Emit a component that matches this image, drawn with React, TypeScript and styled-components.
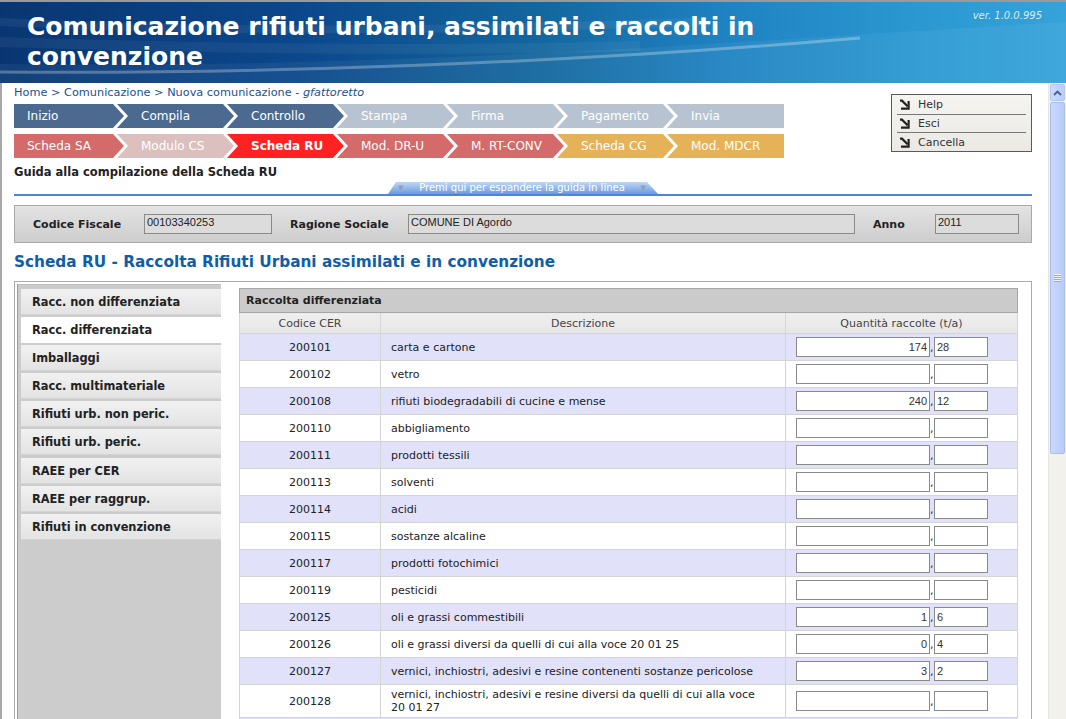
import React, { FC } from "react";
import styled, { createGlobalStyle } from "styled-components";

type Row = { code: string; desc: string; whole?: string; dec?: string; tall?: boolean };

const steps = ["Inizio", "Compila", "Controllo", "Stampa", "Firma", "Pagamento", "Invia"];
const stepColors = ["#4c6a90", "#4c6a90", "#4c6a90", "#b8c3d1", "#b8c3d1", "#b8c3d1", "#b8c3d1"];

const forms = [
  { label: "Scheda SA", color: "#d46a6a" },
  { label: "Modulo CS", color: "#dcbfbf" },
  { label: "Scheda RU", color: "#ff2222", active: true },
  { label: "Mod. DR-U", color: "#d46a6a" },
  { label: "M. RT-CONV", color: "#d46a6a" },
  { label: "Scheda CG", color: "#e6b258" },
  { label: "Mod. MDCR", color: "#e6b258" },
];

const menu = [
  "Racc. non differenziata",
  "Racc. differenziata",
  "Imballaggi",
  "Racc. multimateriale",
  "Rifiuti urb. non peric.",
  "Rifiuti urb. peric.",
  "RAEE per CER",
  "RAEE per raggrup.",
  "Rifiuti in convenzione",
];

const rows: Row[] = [
  { code: "200101", desc: "carta e cartone", whole: "174", dec: "28" },
  { code: "200102", desc: "vetro" },
  { code: "200108", desc: "rifiuti biodegradabili di cucine e mense", whole: "240", dec: "12" },
  { code: "200110", desc: "abbigliamento" },
  { code: "200111", desc: "prodotti tessili" },
  { code: "200113", desc: "solventi" },
  { code: "200114", desc: "acidi" },
  { code: "200115", desc: "sostanze alcaline" },
  { code: "200117", desc: "prodotti fotochimici" },
  { code: "200119", desc: "pesticidi" },
  { code: "200125", desc: "oli e grassi commestibili", whole: "1", dec: "6" },
  { code: "200126", desc: "oli e grassi diversi da quelli di cui alla voce 20 01 25", whole: "0", dec: "4" },
  { code: "200127", desc: "vernici, inchiostri, adesivi e resine contenenti sostanze pericolose", whole: "3", dec: "2" },
  { code: "200128", desc: "vernici, inchiostri, adesivi e resine diversi da quelli di cui alla voce 20 01 27", tall: true },
];

const LinkArrow: FC = () => (
  <svg width="11" height="11" viewBox="0 0 11 11">
    <path d="M1 1.6 H3 L8.6 7.2" stroke="#222" strokeWidth="2.2" fill="none" />
    <path d="M9.6 2 V9.6 H2" stroke="#222" strokeWidth="2.2" fill="none" />
  </svg>
);

const Swoosh: FC = () => (
  <HeaderArt viewBox="0 0 1066 81" preserveAspectRatio="none">
    <path d="M0 70 C 250 72, 560 62, 860 36" stroke="#ffffff" strokeOpacity="0.28" strokeWidth="3" fill="none" />
    <path d="M0 62 C 300 66, 600 50, 900 30 L 1066 20 L1066 81 L0 81 Z" fill="#ffffff" fillOpacity="0.05" />
    <path d="M0 20 C 200 30, 400 30, 700 20" stroke="#ffffff" strokeOpacity="0.06" strokeWidth="8" fill="none" />
    <path d="M0 40 C 200 46, 400 50, 640 44" stroke="#ffffff" strokeOpacity="0.05" strokeWidth="10" fill="none" />
  </HeaderArt>
);

const App: FC = () => (
  <Page>
    <GlobalStyle />
    <Header>
      <Swoosh />
      <HeaderTitle>
        Comunicazione rifiuti urbani, assimilati e raccolti in
        <br />
        convenzione
      </HeaderTitle>
      <Version>ver. 1.0.0.995</Version>
    </Header>
    <Body>
      <Frame>
        <TopSection>
          <TopLeft>
            <Breadcrumb>
              Home &gt; Comunicazione &gt; Nuova comunicazione - <em>gfattoretto</em>
            </Breadcrumb>
            <StepRow>
              {steps.map((s, i) => (
                <Step key={s} $color={stepColors[i]} $first={i === 0} $last={i === steps.length - 1}>
                  {s}
                </Step>
              ))}
            </StepRow>
            <StepRow>
              {forms.map((f, i) => (
                <Step
                  key={f.label}
                  $color={f.color}
                  $first={i === 0}
                  $last={i === forms.length - 1}
                  $bold={f.active}
                >
                  {f.label}
                </Step>
              ))}
            </StepRow>
            <GuideTitle>Guida alla compilazione della Scheda RU</GuideTitle>
          </TopLeft>
          <HelpBox>
            <HelpItem>
              <LinkArrow />
              Help
            </HelpItem>
            <HelpItem>
              <LinkArrow />
              Esci
            </HelpItem>
            <HelpItem>
              <LinkArrow />
              Cancella
            </HelpItem>
          </HelpBox>
        </TopSection>
        <GuideBar>
          <GuideTab>
            <Tri>▼</Tri>
            Premi qui per espandere la guida in linea
            <Tri>▼</Tri>
          </GuideTab>
        </GuideBar>
        <InfoBar>
          <InfoLabel $w={129}>Codice Fiscale</InfoLabel>
          <InfoField $w={128}>00103340253</InfoField>
          <InfoLabel $w={136}>Ragione Sociale</InfoLabel>
          <InfoField $w={447}>COMUNE DI Agordo</InfoField>
          <InfoLabel $w={80}>Anno</InfoLabel>
          <InfoField $w={84}>2011</InfoField>
        </InfoBar>
        <PageTitle>Scheda RU - Raccolta Rifiuti Urbani assimilati e in convenzione</PageTitle>
        <MainBox>
          <SideMenu>
            {menu.map((m, i) => (
              <MenuItem key={m} $active={i === 1}>
                {m}
              </MenuItem>
            ))}
          </SideMenu>
          <TableArea>
            <DataTable>
              <colgroup>
                <col style={{ width: 141 }} />
                <col style={{ width: 405 }} />
                <col style={{ width: 232 }} />
              </colgroup>
              <thead>
                <tr>
                  <CaptionCell colSpan={3}>Raccolta differenziata</CaptionCell>
                </tr>
                <tr>
                  <HeadCell>Codice CER</HeadCell>
                  <HeadCell>Descrizione</HeadCell>
                  <HeadCell>Quantità raccolte (t/a)</HeadCell>
                </tr>
              </thead>
              <tbody>
                {rows.map((r, i) => (
                  <BodyRow key={r.code} $alt={i % 2 === 0} $tall={r.tall}>
                    <CodeCell>{r.code}</CodeCell>
                    <DescCell>{r.desc}</DescCell>
                    <QtyCell>
                      <WholeInput readOnly value={r.whole ?? ""} />
                      <Comma>,</Comma>
                      <DecInput readOnly value={r.dec ?? ""} />
                    </QtyCell>
                  </BodyRow>
                ))}
              </tbody>
            </DataTable>
            <NextRow />
          </TableArea>
        </MainBox>
      </Frame>
      <Scrollbar>
        <ScrollButton>
          <svg width="9" height="6" viewBox="0 0 9 6">
            <path d="M1 5 L4.5 1.5 L8 5" stroke="#4d5f86" strokeWidth="1.8" fill="none" />
          </svg>
        </ScrollButton>
        <ScrollThumb>
          <Grip />
        </ScrollThumb>
      </Scrollbar>
    </Body>
  </Page>
);

export default App;

const GlobalStyle = createGlobalStyle`
  html, body {
    margin: 0;
    padding: 0;
    background: #fff;
    overflow: hidden;
  }
  body {
    font-family: "DejaVu Sans", Verdana, sans-serif;
  }
`;

const Page = styled.div`
  width: 1066px;
  height: 719px;
  display: flex;
  flex-direction: column;
  overflow: hidden;
`;

const Header = styled.div`
  position: relative;
  height: 81px;
  flex-shrink: 0;
  border-top: 2px solid #9a9a9a;
  background: linear-gradient(90deg, #093672 0%, #0b478b 28%, #13669d 50%, #1f82c2 68%, #2a97d0 85%, #35a3da 100%);
  overflow: hidden;
`;

const HeaderArt = styled.svg`
  position: absolute;
  inset: 0;
  width: 100%;
  height: 100%;
`;

const HeaderTitle = styled.h1`
  position: relative;
  margin: 0;
  padding: 10px 0 0 27px;
  color: #fff;
  font-family: "DejaVu Sans", Verdana, sans-serif;
  font-size: 25px;
  line-height: 30px;
  font-weight: bold;
`;

const Version = styled.div`
  position: absolute;
  top: 8px;
  right: 24px;
  color: #dde8f2;
  font-size: 10px;
  font-style: italic;
`;

const Body = styled.div`
  flex: 1;
  display: flex;
  min-height: 0;
`;

const Frame = styled.div`
  flex: 1;
  border-left: 2px solid #a8a8a8;
  padding: 2px 16px 0 12px;
  overflow: hidden;
`;

const TopSection = styled.div`
  display: flex;
  justify-content: space-between;
`;

const TopLeft = styled.div`
  display: flex;
  flex-direction: column;
`;

const Breadcrumb = styled.div`
  font-size: 11.3px;
  line-height: 15px;
  color: #1b5291;
  margin-bottom: 4px;

  em {
    font-style: italic;
  }
`;

const StepRow = styled.div`
  display: flex;
  margin-bottom: 6px;
`;

const Step = styled.div<{ $color: string; $first?: boolean; $last?: boolean; $bold?: boolean }>`
  height: 24px;
  width: ${(p) => (p.$first ? 110 : 117)}px;
  margin-left: ${(p) => (p.$first ? 0 : -7)}px;
  padding-left: ${(p) => (p.$first ? 13 : 24)}px;
  box-sizing: border-box;
  background: ${(p) => p.$color};
  color: #fff;
  font-size: 12px;
  font-weight: ${(p) => (p.$bold ? "bold" : "normal")};
  line-height: 24px;
  white-space: nowrap;
  clip-path: ${(p) =>
    p.$first
      ? "polygon(0 0, 99px 0, 110px 50%, 99px 100%, 0 100%)"
      : p.$last
      ? "polygon(0 0, 100% 0, 100% 100%, 0 100%, 11px 50%)"
      : "polygon(0 0, 106px 0, 117px 50%, 106px 100%, 0 100%, 11px 50%)"};
`;

const GuideTitle = styled.div`
  font-size: 11.5px;
  font-weight: bold;
  color: #222;
  line-height: 14px;
  margin-top: 1px;
`;

const HelpBox = styled.div`
  margin-top: 9px;
  width: 141px;
  height: 58px;
  box-sizing: border-box;
  border: 1px solid #5a5a5a;
  background: linear-gradient(#f5f4f0, #ebe9e4);
  padding: 1px 5px 0 5px;
  display: flex;
  flex-direction: column;
`;

const HelpItem = styled.div`
  display: flex;
  align-items: center;
  gap: 8px;
  height: 18px;
  padding-left: 2px;
  font-size: 11px;
  color: #333;

  &:not(:last-child) {
    border-bottom: 1px solid #777;
  }
`;

const GuideBar = styled.div`
  height: 13px;
  border-bottom: 2px solid #4a87d6;
  position: relative;
  margin-top: 2px;
`;

const GuideTab = styled.div`
  position: absolute;
  left: 374px;
  bottom: 0;
  width: 270px;
  height: 12px;
  box-sizing: border-box;
  padding: 0 12px 0 10px;
  display: flex;
  align-items: center;
  justify-content: space-between;
  background: linear-gradient(#c2d7f3, #6a9ae0);
  color: #fff;
  font-size: 10px;
  line-height: 12px;
  clip-path: polygon(8px 0, 259px 0, 100% 100%, 0 100%);
`;

const Tri = styled.span`
  font-size: 7px;
  color: #8da1bb;
`;

const InfoBar = styled.div`
  margin-top: 9px;
  height: 38px;
  box-sizing: border-box;
  border: 1px solid #a9a9a9;
  background: linear-gradient(#e3e3e3, #cdcdcd);
  display: flex;
  align-items: center;
`;

const InfoLabel = styled.div<{ $w: number }>`
  width: ${(p) => p.$w}px;
  box-sizing: border-box;
  padding-left: 18px;
  font-size: 11px;
  font-weight: bold;
  color: #222;
  flex-shrink: 0;
`;

const InfoField = styled.div<{ $w: number }>`
  width: ${(p) => p.$w}px;
  height: 20px;
  box-sizing: border-box;
  border: 1px solid #8a8a8a;
  background: #dcdcdc;
  font-family: "Liberation Sans", Arial, sans-serif;
  font-size: 11px;
  line-height: 15px;
  padding-left: 2px;
  color: #222;
  flex-shrink: 0;
`;

const PageTitle = styled.h2`
  margin: 9px 0 0 0;
  font-size: 15.3px;
  line-height: 20px;
  font-weight: bold;
  color: #0f5ea9;
`;

const MainBox = styled.div`
  margin-top: 9px;
  border: 1px solid #ababab;
  border-bottom: none;
  display: flex;
  align-items: flex-start;
  padding: 2px 13px 0 2px;
  height: 460px;
`;

const SideMenu = styled.div`
  width: 204px;
  align-self: stretch;
  box-sizing: border-box;
  border-left: 1px solid #9c9c9c;
  border-top: 1px solid #bdbdbd;
  background: #cccccc;
  padding: 4px 0 0 3px;
  flex-shrink: 0;
`;

const MenuItem = styled.div<{ $active?: boolean }>`
  height: 26px;
  margin-bottom: 2.1px;
  box-sizing: border-box;
  padding-left: 11px;
  margin-right: ${(p) => (p.$active ? -1 : 0)}px;
  background: ${(p) => (p.$active ? "#ffffff" : "linear-gradient(#f1f1f1, #e3e3e3)")};
  border-bottom: 1px solid ${(p) => (p.$active ? "#ffffff" : "#d4d4d4")};
  font-size: 11.4px;
  font-weight: bold;
  color: #222;
  line-height: 27px;
  white-space: nowrap;
`;

const TableArea = styled.div`
  margin: 4px 0 0 18px;
  width: 778px;
`;

const DataTable = styled.table`
  width: 778px;
  border-collapse: collapse;
  table-layout: fixed;
  font-size: 11px;
  color: #222;
`;

const CaptionCell = styled.th`
  height: 23px;
  padding: 0 0 0 6px;
  text-align: left;
  background: #cbcbcb;
  border: 1px solid #a6a6a6;
  font-weight: bold;
  font-size: 11px;
`;

const HeadCell = styled.th`
  height: 20px;
  padding: 0;
  font-weight: normal;
  color: #444;
  background: linear-gradient(#efefef, #e6e6e6);
  border: 1px solid #d6d6d6;
  border-top: none;
`;

const BodyRow = styled.tr<{ $alt: boolean; $tall?: boolean }>`
  height: ${(p) => (p.$tall ? 33 : 27)}px;
  background: ${(p) => (p.$alt ? "#e1e1fa" : "#ffffff")};

  td {
    border: 1px solid #d4d4d4;
    padding: 0;
  }
`;

const NextRow = styled.div`
  height: 26px;
  background: #e1e1fa;
  border: 1px solid #d4d4d4;
  border-top: none;
`;

const CodeCell = styled.td`
  text-align: center;
`;

const DescCell = styled.td`
  && {
    padding: 0 16px 0 10px;
  }
  line-height: 13px;
`;

const QtyCell = styled.td`
  && {
    padding-left: 10px;
  }
  white-space: nowrap;
`;

const WholeInput = styled.input`
  width: 134px;
  height: 20px;
  box-sizing: border-box;
  border: 1px solid #8a8a8a;
  background: #fff;
  font-family: "Liberation Sans", Arial, sans-serif;
  font-size: 11px;
  text-align: right;
  padding: 0 2px;
  color: #333;
  vertical-align: middle;
  outline: none;
`;

const DecInput = styled(WholeInput)`
  width: 54px;
  text-align: left;
`;

const Comma = styled.span`
  display: inline-block;
  width: 4px;
  font-size: 11px;
  vertical-align: middle;
`;

const Scrollbar = styled.div`
  width: 18px;
  flex-shrink: 0;
  background: #f3f1ec;
  border-left: 1px solid #e8e6e0;
  box-sizing: border-box;
  padding: 1px 1px 0 1px;
  display: flex;
  flex-direction: column;
`;

const ScrollButton = styled.div`
  height: 15px;
  border: 1px solid #b3c6f2;
  border-radius: 2px;
  background: linear-gradient(90deg, #cbdaff, #b9cdf9);
  display: flex;
  align-items: center;
  justify-content: center;
`;

const ScrollThumb = styled.div`
  margin-top: 1px;
  height: 350px;
  border: 1px solid #a8bdf0;
  border-radius: 2px;
  background: linear-gradient(90deg, #c9d8fd, #b8cbf8);
  display: flex;
  align-items: center;
  justify-content: center;
`;

const Grip = styled.div`
  width: 7px;
  height: 8px;
  background: repeating-linear-gradient(#eef3ff 0 1px, #8faae6 1px 2px);
`;
